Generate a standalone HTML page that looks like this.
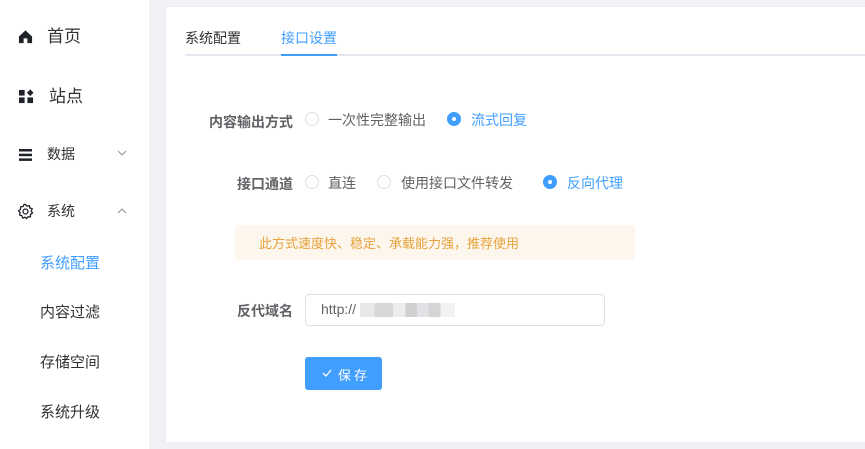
<!DOCTYPE html>
<html><head><meta charset="utf-8"><style>
*{margin:0;padding:0;box-sizing:border-box}
body{width:865px;height:449px;overflow:hidden;background:#f0f2f5;font-family:"Liberation Sans","Noto Sans CJK SC",sans-serif;position:relative;color:#303133}
.side{position:absolute;left:0;top:0;width:149px;height:449px;background:#fff}
.it{position:absolute;left:0;font-size:14px;color:#303133}
.ic{position:absolute;left:18px}
.card{position:absolute;left:165px;top:6px;width:710px;height:437px;background:#fff;border:1px solid #ebeef5}
.a{position:absolute;white-space:nowrap}
.lbl{font-size:14px;font-weight:bold;color:#606266}
.r{position:absolute;width:14px;height:14px;border:1px solid #dcdfe6;border-radius:50%;background:#fff}
.r.on{border-color:#409eff;background:#409eff}
.r.on:after{content:"";position:absolute;left:4px;top:4px;width:4px;height:4px;border-radius:50%;background:#fff}
.rt{font-size:14px;color:#606266}
</style></head><body>
<div class="side">
<svg class="ic" style="left:18px;top:29px" width="15" height="15" viewBox="0 0 16 16"><path d="M1 8 L8 1.5 L15 8 V15 H10 V10 H6 V15 H1Z" fill="#1f2329"/></svg>
<div class="it" style="left:47px;top:22px;font-size:17px">首页</div>
<svg class="ic" style="left:19px;top:89px" width="15" height="15" viewBox="0 0 16 16" fill="#1f2329"><rect x="0" y="1" width="6" height="6"/><rect x="0" y="9" width="6" height="6"/><rect x="9" y="9" width="6" height="6"/><rect x="9.5" y="1.5" width="5" height="5" transform="rotate(45 12 4)"/></svg>
<div class="it" style="left:49px;top:82px;font-size:17px">站点</div>
<svg class="ic" style="left:19px;top:149px" width="13" height="12" viewBox="0 0 13 12" fill="#1f2329"><rect y="0" width="13" height="2.5"/><rect y="4.7" width="13" height="2.5"/><rect y="9.4" width="13" height="2.5"/></svg>
<div class="it" style="left:47px;top:144px">数据</div>
<svg class="a" style="left:117px;top:150px" width="10" height="7" viewBox="0 0 10 7"><path d="M1 1 L5 5 L9 1" fill="none" stroke="#909399" stroke-width="1"/></svg>
<svg class="ic" style="left:17px;top:203px" width="17" height="17" viewBox="0 0 24 24"><path d="M12 2 L14 4.5 L17.5 3.5 L18 7 L21.5 8 L20 11.5 L22 14 L19 16 L19 19.5 L15.5 19.5 L13.5 22 L11 20 L8 21.5 L7 18 L3.5 17 L4.5 13.5 L2 11 L5 9 L5 5.5 L8.5 5 L10 2Z" fill="none" stroke="#1f2329" stroke-width="1.8" stroke-linejoin="round"/><circle cx="12" cy="12" r="3.5" fill="none" stroke="#1f2329" stroke-width="1.8"/></svg>
<div class="it" style="left:47px;top:201px">系统</div>
<svg class="a" style="left:117px;top:207px" width="10" height="7" viewBox="0 0 10 7"><path d="M1 6 L5 2 L9 6" fill="none" stroke="#909399" stroke-width="1"/></svg>
<div class="it" style="left:40px;top:252px;font-size:15px;color:#409eff">系统配置</div>
<div class="it" style="left:40px;top:301px;font-size:15px">内容过滤</div>
<div class="it" style="left:40px;top:351px;font-size:15px">存储空间</div>
<div class="it" style="left:40px;top:401px;font-size:15px">系统升级</div>
</div>
<div class="card"></div>
<div class="a" style="left:185px;top:28px;font-size:14px;color:#303133">系统配置</div>
<div class="a" style="left:281px;top:28px;font-size:14px;color:#409eff">接口设置</div>
<div class="a" style="left:185px;top:54px;width:680px;height:2px;background:#e4e7ed"></div>
<div class="a" style="left:281px;top:54px;width:56px;height:2px;background:#409eff"></div>

<div class="a lbl" style="left:209px;top:112px">内容输出方式</div>
<div class="r" style="left:305px;top:112px"></div><div class="a rt" style="left:328px;top:110px">一次性完整输出</div>
<div class="r on" style="left:447px;top:112px"></div><div class="a rt" style="left:471px;top:110px;color:#409eff">流式回复</div>

<div class="a lbl" style="left:237px;top:174px">接口通道</div>
<div class="r" style="left:305px;top:175px"></div><div class="a rt" style="left:328px;top:173px">直连</div>
<div class="r" style="left:377px;top:175px"></div><div class="a rt" style="left:401px;top:173px">使用接口文件转发</div>
<div class="r on" style="left:543px;top:175px"></div><div class="a rt" style="left:567px;top:173px;color:#409eff">反向代理</div>

<div class="a" style="left:235px;top:225px;width:400px;height:35px;background:#fdf6ec;border-radius:4px"></div>
<div class="a" style="left:259px;top:233px;font-size:13px;color:#e6a23c">此方式速度快、稳定、承载能力强，推荐使用</div>

<div class="a lbl" style="left:237px;top:301px">反代域名</div>
<div class="a" style="left:305px;top:294px;width:300px;height:32px;border:1px solid #dcdfe6;border-radius:4px"></div>
<div class="a" style="left:321px;top:301px;font-size:14px;color:#606266">http://</div>
<div class="a" style="left:360px;top:303px;width:95px;height:14px;background:linear-gradient(90deg,#e8e8e8 0 15%,#d8d8d8 15% 35%,#ececec 35% 48%,#cfcfcf 48% 60%,#e0e2e6 60% 72%,#d5d5d5 72% 85%,#f2f2f4 85%)"></div>

<div class="a" style="left:305px;top:357px;width:77px;height:33px;background:#409eff;border-radius:3px"></div>
<svg class="a" style="left:322px;top:369px" width="10" height="8" viewBox="0 0 10 8"><path d="M1 4 L4 7 L9 1" fill="none" stroke="#fff" stroke-width="1.3"/></svg>
<div class="a" style="left:338px;top:365px;font-size:13px;color:#fff;letter-spacing:3px">保存</div>
</body></html>
